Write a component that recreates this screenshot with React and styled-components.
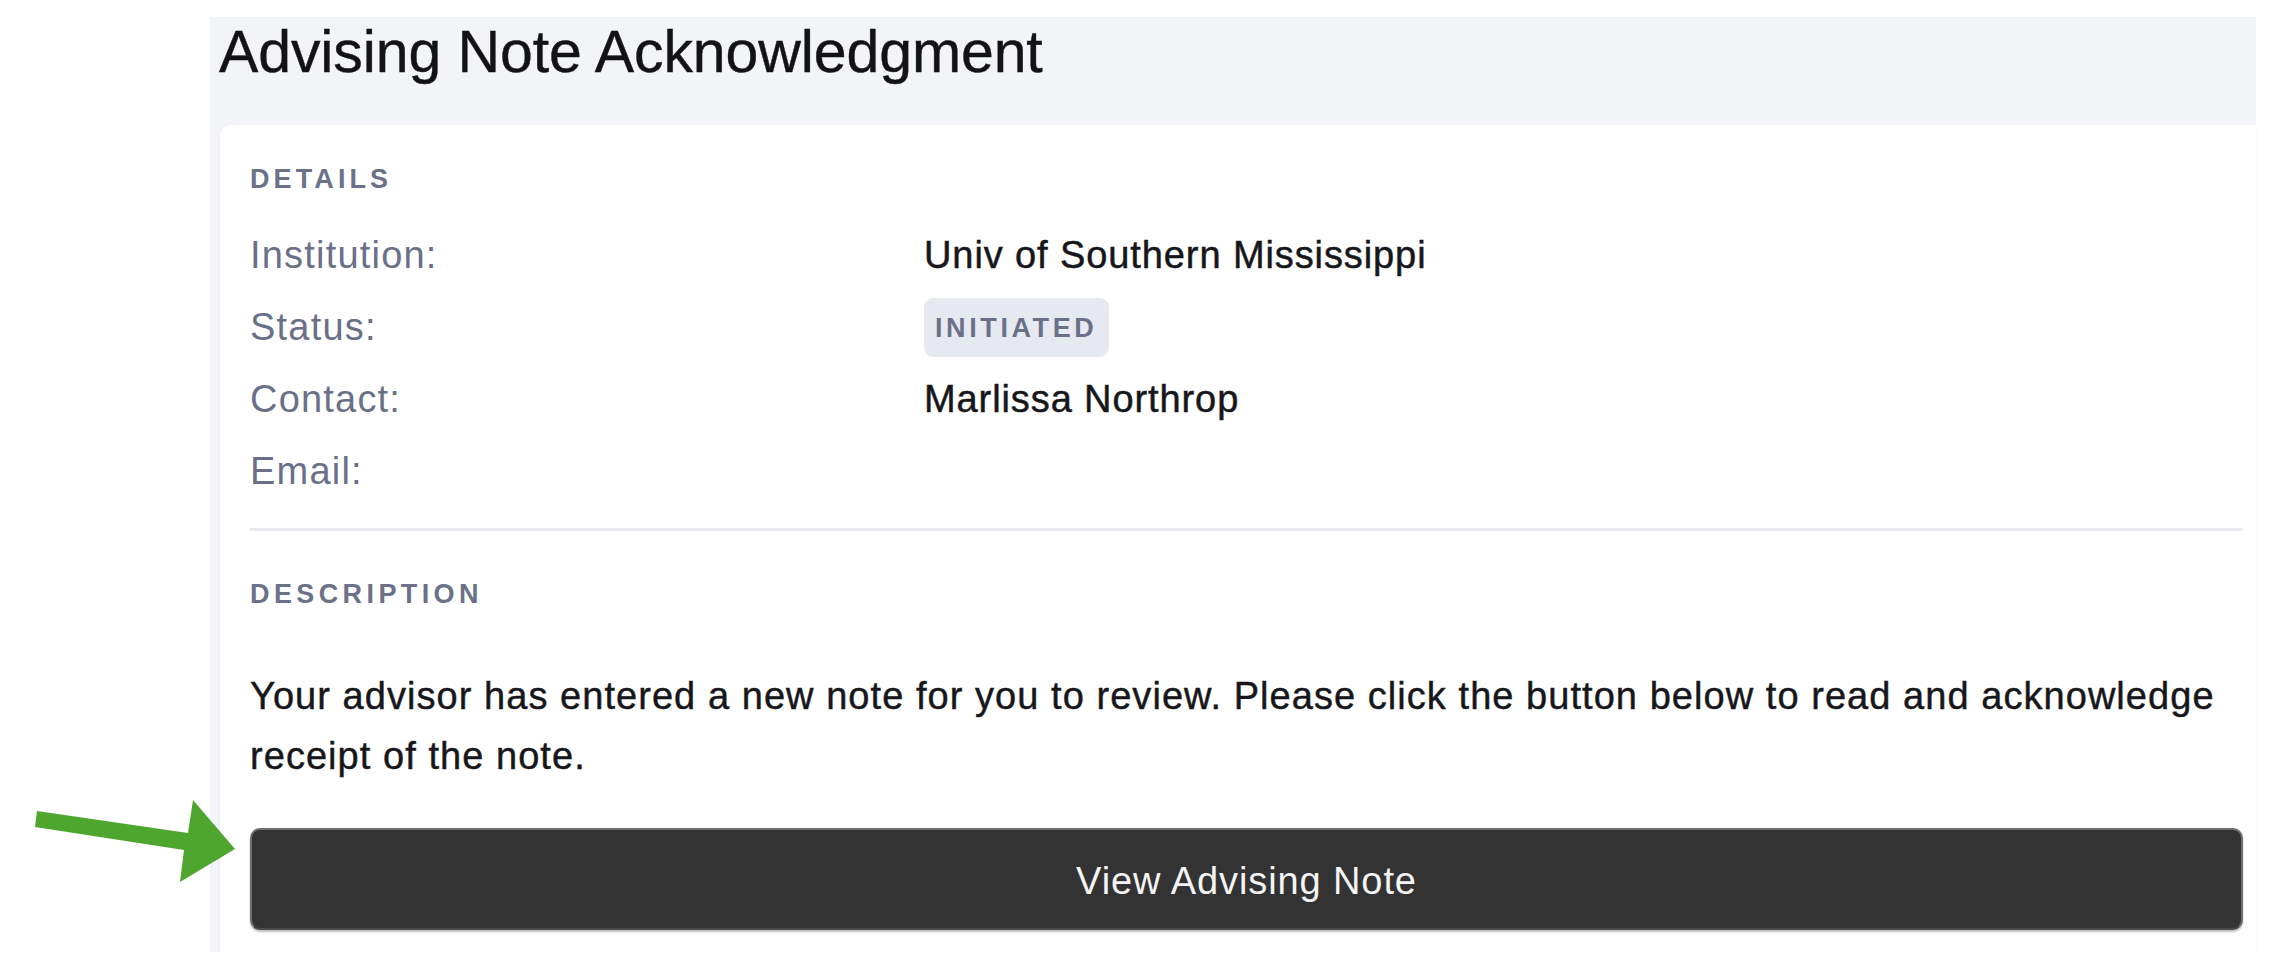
import styled, { createGlobalStyle } from 'styled-components'

const GlobalStyle = createGlobalStyle`
  body {
    margin: 0;
    background: #ffffff;
    font-family: "Liberation Sans", Arial, sans-serif;
  }
`

const details = [
  { label: "Institution:", value: "Univ of Southern Mississippi" },
  { label: "Status:", badge: "INITIATED" },
  { label: "Contact:", value: "Marlissa Northrop" },
  { label: "Email:", value: "" },
]

function Arrow() {
  return (
    <Pointer width="210" height="92" viewBox="0 0 210 92">
      <polygon
        points="7,16 158,38 163,5 205,54 150,87 154,55 5,32"
        fill="#4ea62e"
      />
    </Pointer>
  )
}

function App() {
  return (
    <Page>
      <GlobalStyle />
      <Arrow />
      <Panel>
        <Header>
          <Title>Advising Note Acknowledgment</Title>
        </Header>
        <Card>
          <SectionTitle>DETAILS</SectionTitle>
          <DetailGrid>
            {details.map((row) => (
              <Row key={row.label}>
                <Label>{row.label}</Label>
                {row.badge ? <Badge>{row.badge}</Badge> : <Value>{row.value}</Value>}
              </Row>
            ))}
          </DetailGrid>
          <Divider />
          <SectionTitle $gap="45px" $spacing="4.4px">DESCRIPTION</SectionTitle>
          <Description>
            Your advisor has entered a new note for you to review. Please click the button below to read and acknowledge receipt of the note.
          </Description>
          <ViewButton type="button">View Advising Note</ViewButton>
        </Card>
      </Panel>
    </Page>
  )
}

export default App

const Page = styled.div`
  position: relative;
  padding: 17px 15px 0 210px;
`

const Pointer = styled.svg`
  position: absolute;
  left: 30px;
  top: 795px;
`

const Panel = styled.div`
  background: #f3f4f8;
  display: flex;
  flex-direction: column;
`

const Header = styled.header`
  height: 108px;
  box-sizing: border-box;
  padding: 6px 0 0 9px;
`

const Title = styled.h1`
  margin: 0;
  font-size: 59px;
  line-height: 58px;
  font-weight: 400;
  letter-spacing: -0.1px;
  color: #131316;
  -webkit-text-stroke: 0.4px #131316;
`

const Card = styled.section`
  margin-left: 10px;
  background: #ffffff;
  border-top-left-radius: 10px;
  box-shadow: 0 2px 5px rgba(30, 35, 60, 0.04);
  padding: 36px 13px 22px 30px;
  display: flex;
  flex-direction: column;
`

const SectionTitle = styled.h3`
  margin: ${(p) => p.$gap || '0'} 0 0;
  font-size: 27px;
  line-height: 36px;
  font-weight: 700;
  letter-spacing: ${(p) => p.$spacing || '4.1px'};
  color: #6b7189;
`

const DetailGrid = styled.div`
  margin-top: 22px;
  display: flex;
  flex-direction: column;
`

const Row = styled.div`
  display: grid;
  grid-template-columns: 674px 1fr;
  align-items: center;
  height: 72px;
`

const Label = styled.span`
  font-size: 38px;
  letter-spacing: 1.2px;
  color: #6a7088;
`

const Value = styled.span`
  font-size: 38px;
  letter-spacing: 0.9px;
  color: #17171b;
  -webkit-text-stroke: 0.5px #17171b;
`

const Badge = styled.span`
  justify-self: start;
  box-sizing: border-box;
  height: 59px;
  display: inline-flex;
  align-items: center;
  padding: 2px 12px 0 11px;
  border-radius: 9px;
  background: #e7e9f1;
  color: #6b7089;
  font-size: 27px;
  font-weight: 700;
  letter-spacing: 3.6px;
`

const Divider = styled.hr`
  margin: 21px 0 0;
  border: none;
  height: 3px;
  background: #e9eaf0;
`

const Description = styled.p`
  margin: 54px 0 0;
  font-size: 38px;
  letter-spacing: 1.05px;
  line-height: 60px;
  color: #17171b;
  -webkit-text-stroke: 0.45px #17171b;
`

const ViewButton = styled.button`
  margin-top: 42px;
  height: 102px;
  width: 100%;
  border: 2px solid #6f6f6f;
  border-bottom-color: #4a4a4a;
  border-radius: 10px;
  background: #333333;
  color: #f4f4f4;
  font-family: "Liberation Sans", Arial, sans-serif;
  font-size: 38px;
  letter-spacing: 0.9px;
  padding: 4px 0 0;
  box-shadow: 0 2px 2px rgba(0, 0, 0, 0.25);
  cursor: pointer;
`
